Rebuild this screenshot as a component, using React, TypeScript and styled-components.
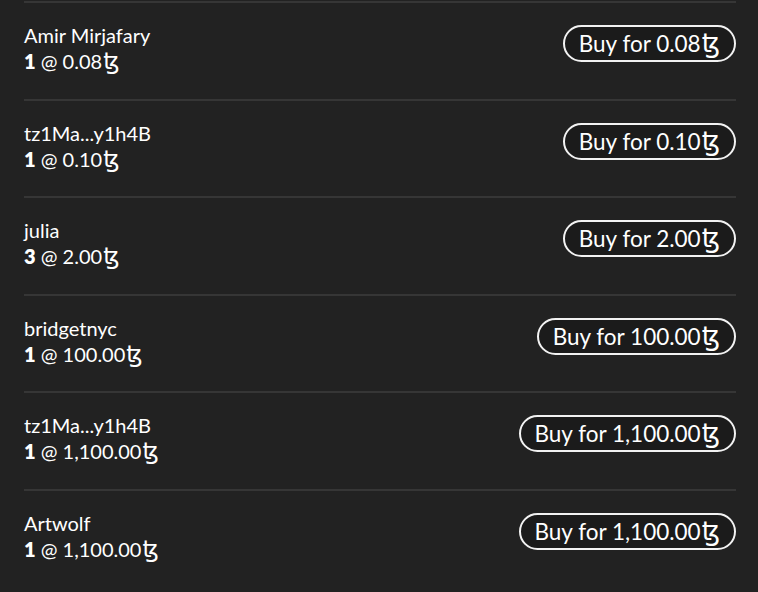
import React from "react";
import styled, { createGlobalStyle } from "styled-components";

const Global = createGlobalStyle`
  html, body { margin: 0; padding: 0; background: #222222; }
  body { font-family: Lato, "Open Sans", "DejaVu Sans", sans-serif; color: #ffffff; }
`;

const Page = styled.div`
  width: 758px;
  height: 592px;
  overflow: hidden;
  background: #222222;
  padding: 1px 22px 0 24px;
  box-sizing: border-box;
`;

const List = styled.ul`
  list-style: none;
  margin: 0;
  padding: 0;
`;

const Row = styled.li`
  display: flex;
  justify-content: space-between;
  align-items: flex-start;
  border-top: 2px solid #363636;
  height: 97.6px;
  box-sizing: border-box;
  padding-top: 19px;
`;

const Info = styled.div`
  display: flex;
  flex-direction: column;
  font-size: 20px;
  line-height: 26px;
`;

const Name = styled.span`
  font-weight: 400;
`;

const Qty = styled.span`
  font-weight: 400;
  b { font-weight: 800; }
`;

const Tez = styled.span`
  font-family: "DejaVu Sans", sans-serif;
  font-size: 1.15em;
  line-height: 0;
  margin-left: 1px;
`;

const BuyButton = styled.button`
  margin-top: 3px;
  background: #1b1b1b;
  color: #ffffff;
  border: 2px solid #f2f2f2;
  border-radius: 999px;
  height: 37px;
  padding: 0 14px;
  font-family: Lato, "Open Sans", sans-serif;
  font-size: 22.5px;
  line-height: 33px;
  cursor: pointer;
  white-space: nowrap;
`;

const offers = [
  { name: "Amir Mirjafary", qty: 1, price: "0.08" },
  { name: "tz1Ma...y1h4B", qty: 1, price: "0.10" },
  { name: "julia", qty: 3, price: "2.00" },
  { name: "bridgetnyc", qty: 1, price: "100.00" },
  { name: "tz1Ma...y1h4B", qty: 1, price: "1,100.00" },
  { name: "Artwolf", qty: 1, price: "1,100.00" },
];

export default function App() {
  return (
    <>
      <Global />
      <Page>
        <List>
          {offers.map((o, i) => (
            <Row key={i}>
              <Info>
                <Name>{o.name}</Name>
                <Qty>
                  <b>{o.qty}</b> @ {o.price}
                  <Tez>ꜩ</Tez>
                </Qty>
              </Info>
              <BuyButton>
                Buy for {o.price}
                <Tez>ꜩ</Tez>
              </BuyButton>
            </Row>
          ))}
        </List>
      </Page>
    </>
  );
}
